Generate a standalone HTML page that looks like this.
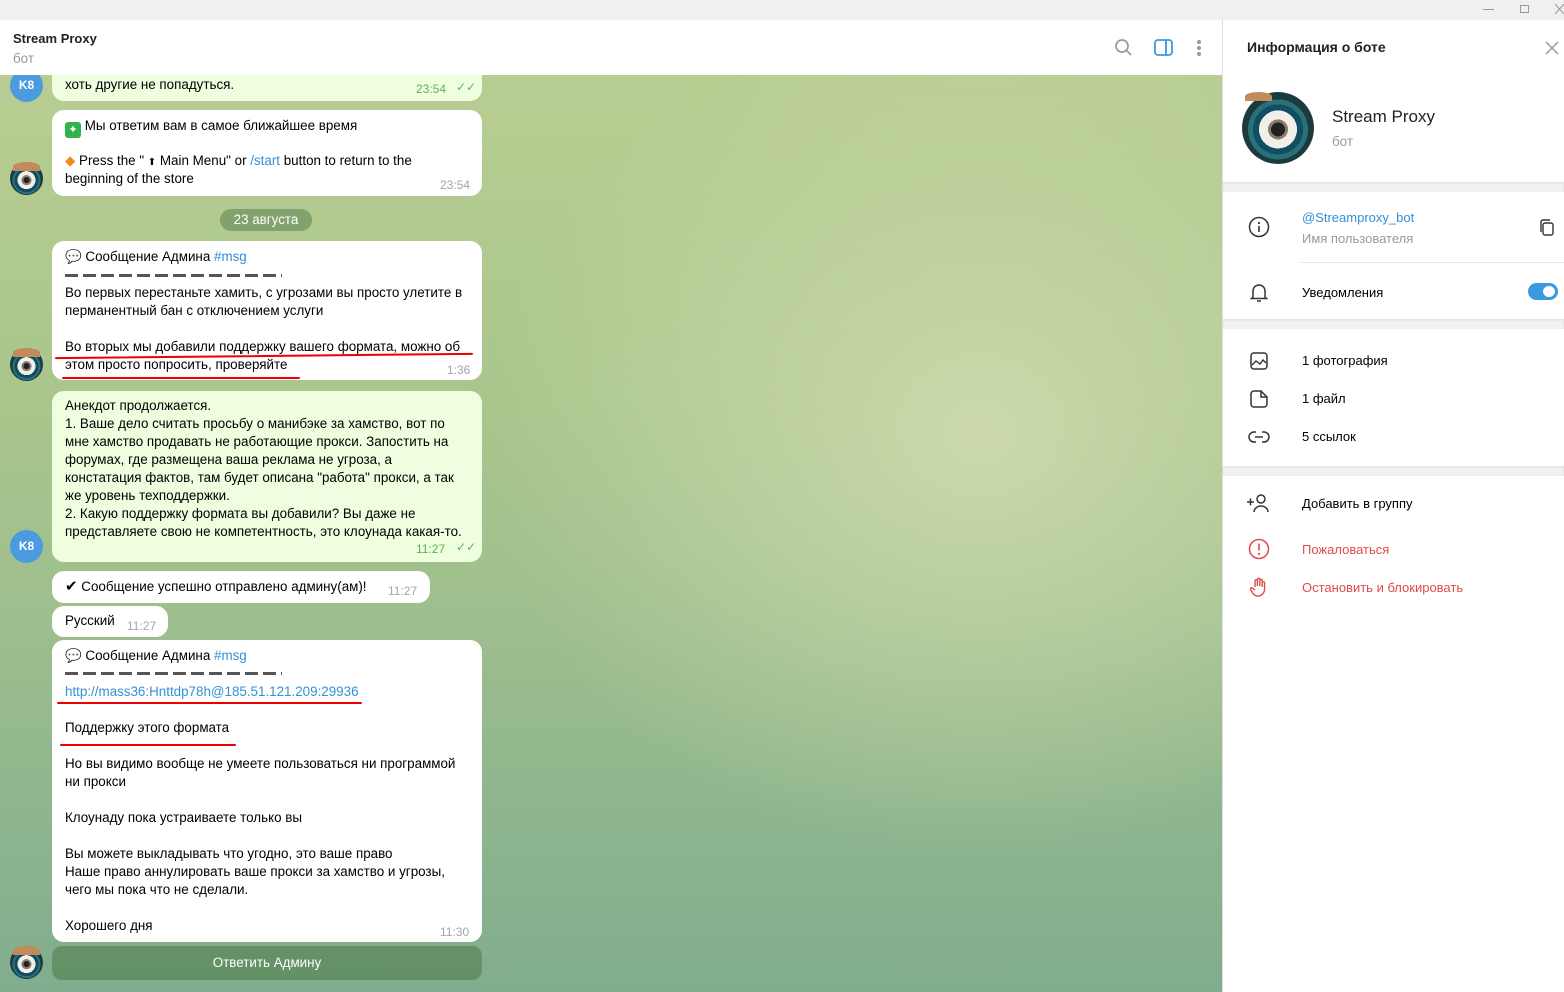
<!DOCTYPE html>
<html><head><meta charset="utf-8"><style>
*{margin:0;padding:0;box-sizing:border-box}
body{width:1564px;height:992px;overflow:hidden;font-family:"Liberation Sans","DejaVu Sans",sans-serif;font-size:13.4px;color:#000;position:relative;background:#fff}
.a{position:absolute;white-space:nowrap}
#tb{position:absolute;left:0;top:0;width:1564px;height:20px;background:#f0f0f0}
#hd{position:absolute;left:0;top:20px;width:1222px;height:55px;background:#fff}
#chat{position:absolute;left:0;top:75px;width:1222px;height:917px;overflow:hidden;
background:radial-gradient(ellipse 500px 420px at 980px 360px,rgba(205,218,172,.95),rgba(205,218,172,0)),linear-gradient(180deg,#b8cd92 0%,#aac68c 35%,#9dbe8e 60%,#80ad8e 100%)}
#rp{position:absolute;left:1222px;top:20px;width:342px;height:972px;background:#fff;border-left:1px solid #e0e0e0}
.b{position:absolute;background:#fff;border-radius:12px}
.g{background:#eefedf}
.l{position:absolute;left:13px;white-space:nowrap;line-height:18px}
.t{position:absolute;font-size:12px;color:#a0a6ac}
.tg{color:#5fb15f}
.lk{color:#3390d6}
.dash{position:absolute;left:13px;height:3px;width:217px;background:repeating-linear-gradient(90deg,#555 0 13px,transparent 13px 18px)}
.av{position:absolute;left:10px;width:33px;height:33px;border-radius:50%;background:radial-gradient(circle at 50% 55%,#222 0 3px,#8a7a70 3px 5px,#f2eee8 5px 9px,#0e4f63 9px 12px,#2b6f79 12px 14px,#1a3a3f 14px);}
.av:before{content:"";position:absolute;left:3px;top:0;width:27px;height:9px;border-radius:50% 50% 0 0;background:#c48a5a}
.k8{position:absolute;left:10px;width:33px;height:33px;border-radius:50%;background:#4b9be0;color:#fff;font-size:12px;text-align:center;line-height:33px;font-weight:bold}
.red{position:absolute;height:2px;background:#e00;border-radius:1px}
.ri{position:absolute;left:1302px;white-space:nowrap;font-size:13px}
.ic{position:absolute;left:1248px}
.sep{position:absolute;left:1223px;width:341px;height:10px;background:#f1f1f1;box-shadow:inset 0 1px 2px rgba(0,0,0,.08)}
</style></head><body>
<div id="tb"><div class="a" style="left:1483px;top:9px;width:11px;height:1px;background:#999"></div>
<div class="a" style="left:1520px;top:5px;width:9px;height:8px;border:1px solid #999"></div>
<svg class="a" style="left:1555px;top:4px" width="9" height="10"><path d="M0 0L9 10M9 0L0 10" stroke="#999" stroke-width="1"/></svg></div>
<div id="hd">
<div class="a" style="left:13px;top:11px;font-weight:bold;font-size:13px;color:#222">Stream Proxy</div>
<div class="a" style="left:13px;top:31px;color:#999">бот</div>
<svg class="a" style="left:1114px;top:18px" width="20" height="20" viewBox="0 0 20 20"><circle cx="8" cy="8" r="6" fill="none" stroke="#999" stroke-width="1.7"/><path d="M12.5 12.5L17 17" stroke="#999" stroke-width="1.7"/></svg>
<svg class="a" style="left:1154px;top:19px" width="20" height="18" viewBox="0 0 20 18"><rect x="1" y="1" width="17" height="15" rx="3" fill="none" stroke="#3a9ae0" stroke-width="1.8"/><path d="M12 1v15" stroke="#3a9ae0" stroke-width="1.8"/></svg>
<svg class="a" style="left:1195px;top:19px" width="8" height="18"><circle cx="4" cy="3" r="2" fill="#999"/><circle cx="4" cy="9" r="2" fill="#999"/><circle cx="4" cy="15" r="2" fill="#999"/></svg>
</div>
<div id="chat">
<div class="b g" style="left:52px;top:-20px;width:430px;height:46px;border-radius:0 0 12px 12px"><div class="l" style="top:21px">хоть другие не попадуться.</div><div class="t tg" style="left:364px;top:27px">23:54</div><div class="t tg" style="left:404px;top:25px">✓✓</div></div>
<div class="k8" style="top:-6px">K8</div>
<div class="b" style="left:52px;top:35px;width:430px;height:86px"><div class="l" style="top:7px"><span style="display:inline-block;width:16px;height:16px;background:#2fb34a;border-radius:3px;color:#fff;text-align:center;line-height:16px;font-size:11px;vertical-align:-3px">✦</span> Мы ответим вам в самое ближайшее время</div>
<div class="l" style="top:42px"><span style="color:#f08a1a">◆</span> Press the " <span style="font-size:10px">⬆</span> Main Menu" or <span class="lk">/start</span> button to return to the</div>
<div class="l" style="top:60px">beginning of the store</div><div class="t" style="left:388px;top:68px">23:54</div></div>
<div class="av" style="top:87px"></div>
<div class="a" style="left:220px;top:134px;width:92px;height:22px;border-radius:11px;background:rgba(90,130,80,.55);color:#fff;text-align:center;line-height:22px">23 августа</div>
<div class="b" style="left:52px;top:166px;width:430px;height:139px">
<div class="l" style="top:7px"><span style="color:#aaa">💬</span> Сообщение Админа <span class="lk">#msg</span></div>
<div class="dash" style="top:33px"></div>
<div class="l" style="top:43px">Во первых перестаньте хамить, с угрозами вы просто улетите в</div>
<div class="l" style="top:61px">перманентный бан с отключением услуги</div>
<div class="l" style="top:97px">Во вторых мы добавили поддержку вашего формата, можно об</div>
<div class="l" style="top:115px">этом просто попросить, проверяйте</div>
<div class="t" style="left:395px;top:122px">1:36</div></div>
<div class="red" style="left:55px;top:280px;width:418px;transform:rotate(-.6deg)"></div>
<div class="red" style="left:62px;top:302px;width:238px"></div>
<div class="av" style="top:273px"></div>
<div class="b g" style="left:52px;top:316px;width:430px;height:171px">
<div class="l" style="top:6px">Анекдот продолжается.</div>
<div class="l" style="top:24px">1. Ваше дело считать просьбу о манибэке за хамство, вот по</div>
<div class="l" style="top:42px">мне хамство продавать не работающие прокси. Запостить на</div>
<div class="l" style="top:60px">форумах, где размещена ваша реклама не угроза, а</div>
<div class="l" style="top:78px">констатация фактов, там будет описана "работа" прокси, а так</div>
<div class="l" style="top:96px">же уровень техподдержки.</div>
<div class="l" style="top:114px">2. Какую поддержку формата вы добавили? Вы даже не</div>
<div class="l" style="top:132px">представляете свою не компетентность, это клоунада какая-то.</div>
<div class="t tg" style="left:364px;top:151px">11:27</div><div class="t tg" style="left:404px;top:149px">✓✓</div></div>
<div class="k8" style="top:455px">K8</div>
<div class="b" style="left:52px;top:496px;width:378px;height:32px"><div class="l" style="top:7px"><b style="font-size:15px">✔</b> Сообщение успешно отправлено админу(ам)!</div><div class="t" style="left:336px;top:13px">11:27</div></div>
<div class="b" style="left:52px;top:531px;width:116px;height:31px"><div class="l" style="top:6px">Русский</div><div class="t" style="left:75px;top:13px">11:27</div></div>
<div class="b" style="left:52px;top:565px;width:430px;height:302px">
<div class="l" style="top:7px"><span style="color:#aaa">💬</span> Сообщение Админа <span class="lk">#msg</span></div>
<div class="dash" style="top:32px"></div>
<div class="l lk" style="top:43px">http://mass36:Hnttdp78h@185.51.121.209:29936</div>
<div class="l" style="top:79px">Поддержку этого формата</div>
<div class="l" style="top:115px">Но вы видимо вообще не умеете пользоваться ни программой</div>
<div class="l" style="top:133px">ни прокси</div>
<div class="l" style="top:169px">Клоунаду пока устраиваете только вы</div>
<div class="l" style="top:205px">Вы можете выкладывать что угодно, это ваше право</div>
<div class="l" style="top:223px">Наше право аннулировать ваше прокси за хамство и угрозы,</div>
<div class="l" style="top:241px">чего мы пока что не сделали.</div>
<div class="l" style="top:277px">Хорошего дня</div>
<div class="t" style="left:388px;top:285px">11:30</div></div>
<div class="red" style="left:57px;top:627px;width:305px"></div>
<div class="red" style="left:60px;top:669px;width:176px"></div>
<div class="a" style="left:52px;top:871px;width:430px;height:34px;border-radius:10px;background:rgba(80,125,75,.6);color:#fff;text-align:center;line-height:34px">Ответить Админу</div>
<div class="av" style="top:871px"></div>
</div>
<div id="rp"></div>
<div class="a" style="left:1247px;top:39px;font-size:14px;font-weight:bold;color:#222">Информация о боте</div>
<svg class="a" style="left:1545px;top:41px" width="14" height="14"><path d="M1 1L13 13M13 1L1 13" stroke="#999" stroke-width="1.5"/></svg>
<div class="av" style="left:1242px;top:92px;width:72px;height:72px;background:radial-gradient(circle at 50% 52%,#222 0 7px,#8a7a70 7px 10px,#f2eee8 10px 19px,#0e4f63 19px 25px,#2b6f79 25px 30px,#1a3a3f 30px)"></div>
<div class="a" style="left:1332px;top:107px;font-size:17px;color:#222">Stream Proxy</div>
<div class="a" style="left:1332px;top:134px;color:#999">бот</div>
<div class="sep" style="top:182px"></div>
<svg class="ic" style="top:216px" width="22" height="22"><circle cx="11" cy="11" r="9.5" fill="none" stroke="#333" stroke-width="1.5"/><path d="M11 10v6" stroke="#333" stroke-width="1.6"/><circle cx="11" cy="7" r="1.1" fill="#333"/></svg>
<div class="ri lk" style="top:210px">@Streamproxy_bot</div>
<div class="ri" style="top:231px;color:#999">Имя пользователя</div>
<svg class="a" style="left:1539px;top:219px" width="16" height="18"><rect x="4" y="4" width="10" height="12" rx="2" fill="none" stroke="#333" stroke-width="1.4"/><path d="M2 13V3a2 2 0 012-2h7" fill="none" stroke="#333" stroke-width="1.4"/></svg>
<div class="a" style="left:1300px;top:262px;width:264px;height:1px;background:#e6e6e6"></div>
<svg class="ic" style="top:281px" width="22" height="22"><path d="M5 16V10a6 6 0 0112 0v6l1.5 1.5h-15z" fill="none" stroke="#333" stroke-width="1.5"/><path d="M9 20h4" stroke="#333" stroke-width="1.5"/></svg>
<div class="ri" style="top:285px">Уведомления</div>
<div class="a" style="left:1528px;top:283px;width:30px;height:17px;border-radius:9px;background:#3a9ae0"></div>
<div class="a" style="left:1541px;top:284px;width:16px;height:15px;border-radius:50%;background:#fff;border:2px solid #3a9ae0"></div>
<div class="sep" style="top:319px"></div>
<svg class="ic" style="top:350px" width="22" height="22"><rect x="3" y="3" width="16" height="16" rx="3" fill="none" stroke="#333" stroke-width="1.5"/><path d="M4 15l4-4 4 3 3-4 3 3" fill="none" stroke="#333" stroke-width="1.4"/></svg>
<div class="ri" style="top:353px">1 фотография</div>
<svg class="ic" style="top:388px" width="22" height="22"><path d="M6 3h7l6 6v7a3 3 0 01-3 3H6a3 3 0 01-3-3V6a3 3 0 013-3z M13 3v6h6" fill="none" stroke="#333" stroke-width="1.5"/></svg>
<div class="ri" style="top:391px">1 файл</div>
<svg class="ic" style="top:426px" width="22" height="22"><path d="M8 6H6a5 5 0 000 10h2M14 6h2a5 5 0 010 10h-2M7 11h8" fill="none" stroke="#333" stroke-width="1.5"/></svg>
<div class="ri" style="top:429px">5 ссылок</div>
<div class="sep" style="top:466px"></div>
<svg class="ic" style="top:492px;left:1246px" width="24" height="22"><path d="M1 10h7M4.5 6.5v7" stroke="#333" stroke-width="1.5"/><circle cx="15" cy="7" r="4" fill="none" stroke="#333" stroke-width="1.5"/><path d="M8 20a7 6 0 0114 0" fill="none" stroke="#333" stroke-width="1.5"/></svg>
<div class="ri" style="top:496px">Добавить в группу</div>
<svg class="ic" style="top:538px" width="22" height="22"><circle cx="11" cy="11" r="9.5" fill="none" stroke="#e04b4b" stroke-width="1.5"/><path d="M11 5.5v7" stroke="#e04b4b" stroke-width="1.6"/><circle cx="11" cy="16" r="1.1" fill="#e04b4b"/></svg>
<div class="ri" style="top:542px;color:#e04b4b">Пожаловаться</div>
<svg class="ic" style="top:576px" width="22" height="22"><path d="M7 11V5a1.2 1.2 0 012.4 0v5V3.5a1.2 1.2 0 012.4 0V10V4.5a1.2 1.2 0 012.4 0V11V7a1.2 1.2 0 012.4 0v6a7 7 0 01-7 7c-2.5 0-4-1.5-5-3l-2-3.5a1.2 1.2 0 012-1.3L7 14" fill="none" stroke="#e04b4b" stroke-width="1.4"/></svg>
<div class="ri" style="top:580px;color:#e04b4b">Остановить и блокировать</div>
</body></html>
